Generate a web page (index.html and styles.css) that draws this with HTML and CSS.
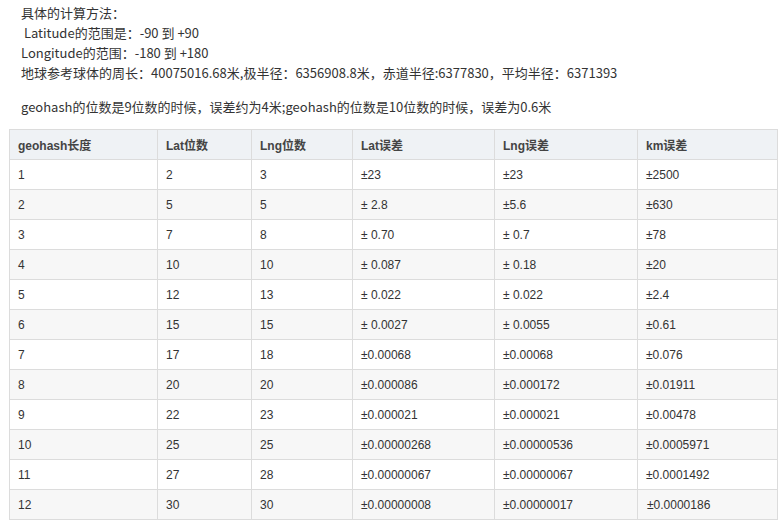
FILE: index.html
```html
<!DOCTYPE html>
<html lang="zh">
<head>
<meta charset="utf-8">
<title>geohash</title>
<link rel="stylesheet" href="styles.css">
</head>
<body>
<div class="article">
  <div class="desc">
    <p class="lines">具体的计算方法：<br>&nbsp;Latitude的范围是：-90 到 +90<br>Longitude的范围：-180 到 +180<br>地球参考球体的周长：40075016.68米,极半径：6356908.8米，赤道半径:6377830，平均半径：6371393</p>
    <p class="lines note">geohash的位数是9位数的时候，误差约为4米;geohash的位数是10位数的时候，误差为0.6米</p>
  </div>
  <table class="geo">
    <colgroup>
      <col class="c1"><col class="c2"><col class="c3"><col class="c4"><col class="c5"><col class="c6">
    </colgroup>
    <thead>
      <tr><th>geohash长度</th><th>Lat位数</th><th>Lng位数</th><th>Lat误差</th><th>Lng误差</th><th>km误差</th></tr>
    </thead>
    <tbody>
      <tr><td>1</td><td>2</td><td>3</td><td>±23</td><td>±23</td><td>±2500</td></tr>
      <tr><td>2</td><td>5</td><td>5</td><td>± 2.8</td><td>±5.6</td><td>±630</td></tr>
      <tr><td>3</td><td>7</td><td>8</td><td>± 0.70</td><td>± 0.7</td><td>±78</td></tr>
      <tr><td>4</td><td>10</td><td>10</td><td>± 0.087</td><td>± 0.18</td><td>±20</td></tr>
      <tr><td>5</td><td>12</td><td>13</td><td>± 0.022</td><td>± 0.022</td><td>±2.4</td></tr>
      <tr><td>6</td><td>15</td><td>15</td><td>± 0.0027</td><td>± 0.0055</td><td>±0.61</td></tr>
      <tr><td>7</td><td>17</td><td>18</td><td>±0.00068</td><td>±0.00068</td><td>±0.076</td></tr>
      <tr><td>8</td><td>20</td><td>20</td><td>±0.000086</td><td>±0.000172</td><td>±0.01911</td></tr>
      <tr><td>9</td><td>22</td><td>23</td><td>±0.000021</td><td>±0.000021</td><td>±0.00478</td></tr>
      <tr><td>10</td><td>25</td><td>25</td><td>±0.00000268</td><td>±0.00000536</td><td>±0.0005971</td></tr>
      <tr><td>11</td><td>27</td><td>28</td><td>±0.00000067</td><td>±0.00000067</td><td>±0.0001492</td></tr>
      <tr><td>12</td><td>30</td><td>30</td><td>±0.00000008</td><td>±0.00000017</td><td class="shift">±0.0000186</td></tr>
    </tbody>
  </table>
</div>
</body>
</html>
```
FILE: styles.css
```css
html, body {
  margin: 0;
  padding: 0;
  background: #fff;
}
.article {
  padding: 3px 6px 0 9px;
  font-family: "Noto Sans CJK SC", "Noto Sans", sans-serif;
  color: #333;
}
.desc {
  padding-left: 12px;
}
.lines {
  margin: 0;
  font-size: 13px;
  line-height: 20px;
  white-space: nowrap;
}
.note {
  margin-top: 14px;
  margin-bottom: 12px;
}
.geo {
  border-collapse: collapse;
  width: 768px;
  table-layout: fixed;
  font-family: "Liberation Sans", Arial, "Noto Sans CJK SC", sans-serif;
  font-size: 12px;
  color: #333;
}
.c1 { width: 148px; }
.c2 { width: 94px; }
.c3 { width: 101px; }
.c4 { width: 142px; }
.c5 { width: 143px; }
.c6 { width: 140px; }
.geo tr {
  height: 30px;
}
.geo th, .geo td {
  border: 1px solid #dcdcdc;
  padding: 0 0 0 8px;
  text-align: left;
  vertical-align: middle;
}
.geo th {
  background: #eff2f5;
  font-weight: bold;
  color: #444;
}
.geo tbody tr:nth-child(even) td {
  background: #f7f7f7;
}
.geo td.shift {
  padding-left: 9px;
  padding-top: 1px;
}
```
